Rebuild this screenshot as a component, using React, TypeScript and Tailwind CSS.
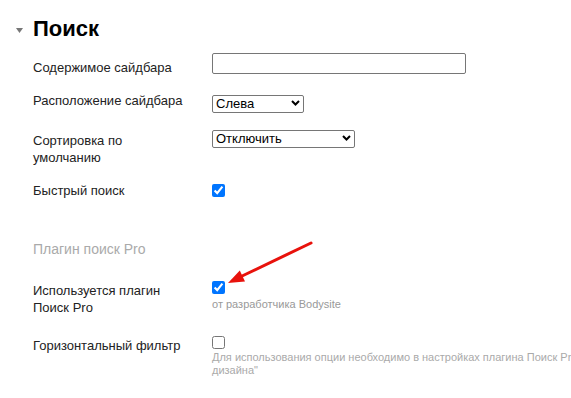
import React from "react";

function Chevron() {
  return (
    <svg
      className="pointer-events-none absolute right-[4px] top-1/2 -translate-y-1/2"
      width="9"
      height="6"
      viewBox="0 0 9 6"
    >
      <path d="M1 1 L4.5 4.5 L8 1" fill="none" stroke="#000" strokeWidth="2" />
    </svg>
  );
}

function Select({ width, value, options }: { width: string; value: string; options: string[] }) {
  return (
    <div className={`relative h-[18px] ${width}`}>
      <select
        defaultValue={value}
        className="h-[18px] w-full appearance-none rounded-[2px] border border-[#767676] bg-white pl-[3px] pr-[16px] text-[13px] leading-[16px] text-black outline-none"
      >
        {options.map((o) => (
          <option key={o}>{o}</option>
        ))}
      </select>
      <Chevron />
    </div>
  );
}

export default function App() {
  return (
    <div className="relative h-[398px] w-[571px] overflow-hidden bg-white font-['Liberation_Sans',Arial,sans-serif] text-[13px] text-[#222]">
      {/* Heading */}
      <div className="flex items-center pl-[16px] pt-[16px]">
        <svg width="7" height="5" viewBox="0 0 7 5" className="mt-[2px]">
          <polygon points="0,0 7,0 3.5,5" fill="#777" />
        </svg>
        <h2 className="ml-[10px] text-[22px] font-bold leading-[26px] text-black">Поиск</h2>
      </div>

      <div className="pl-[33px]">
        {/* Row 1 */}
        <div className="mt-[11px] flex items-start">
          <label className="mt-[6px] w-[179px] shrink-0 pr-[19px] leading-[17px]">Содержимое сайдбара</label>
          <input
            type="text"
            className="h-[21px] w-[254px] rounded-[2px] border border-[#767676] bg-white px-[3px] text-[13px] outline-none"
          />
        </div>

        {/* Row 2 */}
        <div className="mt-[16px] flex items-start">
          <label className="w-[179px] shrink-0 pr-[19px] leading-[17px]">Расположение сайдбара</label>
          <div className="mt-[2px]">
            <Select width="w-[92px]" value="Слева" options={["Слева", "Справа"]} />
          </div>
        </div>

        {/* Row 3 */}
        <div className="mt-[17px] flex items-start">
          <label className="mt-[3px] w-[179px] shrink-0 pr-[19px] leading-[17px]">Сортировка по умолчанию</label>
          <Select width="w-[143px]" value="Отключить" options={["Отключить", "По цене", "По названию"]} />
        </div>

        {/* Row 4 */}
        <div className="mt-[16px] flex items-start">
          <label className="w-[179px] shrink-0 pr-[19px] leading-[17px]">Быстрый поиск</label>
          <input type="checkbox" defaultChecked className="mt-[2px] h-[13px] w-[13px]" />
        </div>

        {/* Sub heading */}
        <div className="mt-[42px] text-[14px] leading-[17px] text-[#aaa]">Плагин поиск Pro</div>

        {/* Row 5 */}
        <div className="mt-[23px] flex items-start">
          <label className="mt-[1px] w-[179px] shrink-0 pr-[19px] leading-[17px]">Используется плагин Поиск Pro</label>
          <div className="flex flex-col items-start">
            <input type="checkbox" defaultChecked className="h-[13px] w-[13px]" />
            <div className="mt-[4px] text-[11px] leading-[13px] text-[#999]">от разработчика Bodysite</div>
          </div>
        </div>

        {/* Row 6 */}
        <div className="mt-[20px] flex items-start">
          <label className="mt-[1px] w-[179px] shrink-0 pr-[19px] leading-[17px]">Горизонтальный фильтр</label>
          <div className="flex flex-col items-start">
            <input type="checkbox" className="h-[13px] w-[13px]" />
            <div className="mt-[2px] whitespace-nowrap text-[11px] leading-[13px] text-[#aaa]">
              Для использования опции необходимо в настройках плагина Поиск Pro включить опцию "Горизонтальный фильтр для
              <br />
              дизайна"
            </div>
          </div>
        </div>
      </div>

      {/* Red annotation arrow */}
      <svg className="pointer-events-none absolute left-0 top-0" width="571" height="398">
        <line x1="311" y1="243" x2="240" y2="277" stroke="#e8120c" strokeWidth="3" strokeLinecap="round" />
        <polygon points="228,283 245,281.5 239.8,270.5" fill="#e8120c" />
      </svg>
    </div>
  );
}
